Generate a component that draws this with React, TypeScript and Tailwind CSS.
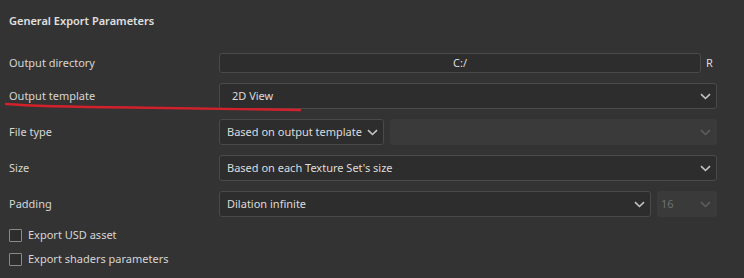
import React from 'react';

function Chevron({ dim = false }: { dim?: boolean }) {
    return (
        <svg width="11" height="7" viewBox="0 0 11 7" className="shrink-0">
            <path d="M1 1.2 L5.5 5.5 L10 1.2" fill="none" stroke={dim ? '#5e5e5e' : '#c4c4c4'} strokeWidth="1.6" />
        </svg>
    );
}

function Select({ value, className = '' }: { value: string; className?: string }) {
    return (
        <div className={`h-[26px] flex items-center justify-between pl-[7px] pr-[5px] rounded-[3px] border border-[#4a4a4a] bg-[#2d2d2d] text-[#dcdcdc] whitespace-nowrap ${className}`}>
            <span>{value}</span>
            <Chevron />
        </div>
    );
}

function Disabled({ value = '', className = '' }: { value?: string; className?: string }) {
    return (
        <div className={`h-[26px] flex items-center justify-between pl-[4px] pr-[6px] rounded-[3px] bg-[#3a3a3a] text-[#707070] ${className}`}>
            <span>{value}</span>
            <Chevron dim />
        </div>
    );
}

function Row({ label, children, className = '' }: { label: string; children: React.ReactNode; className?: string }) {
    return (
        <div className={`flex items-center ${className}`}>
            <div className="w-[210px] shrink-0">{label}</div>
            {children}
        </div>
    );
}

function Check({ label }: { label: string }) {
    return (
        <div className="flex items-center gap-[6px] h-[24px]">
            <div className="w-[13px] h-[13px] border border-[#8a8a8a] rounded-[1px] bg-[#2d2d2d]" />
            <span>{label}</span>
        </div>
    );
}

export default function App() {
    return (
        <div
            className="relative w-[744px] h-[278px] bg-[#333333] text-[#d6d6d6] text-[11px] overflow-hidden pl-[9px]"
            style={{ fontFamily: '"Noto Sans", "Open Sans", sans-serif' }}
        >
            <div className="h-[41px] pt-[1px] flex items-center font-semibold text-[#e0e0e0]">General Export Parameters</div>

            <Row label="Output directory" className="mt-[12px]">
                <div className="w-[482px] h-[20px] flex items-center justify-center rounded-[3px] border border-[#4a4a4a] bg-[#2d2d2d] text-[#dcdcdc]">
                    C:/
                </div>
                <span className="ml-[5px] text-[#dcdcdc]">R</span>
            </Row>

            <Row label="Output template" className="mt-[10px]">
                <Select value="2D View" className="w-[498px] pl-[12px]" />
            </Row>

            <Row label="File type" className="mt-[10px]">
                <Select value="Based on output template" className="w-[165px]" />
                <Disabled className="ml-[6px] w-[327px]" />
            </Row>

            <Row label="Size" className="mt-[10px]">
                <Select value="Based on each Texture Set's size" className="w-[498px]" />
            </Row>

            <Row label="Padding" className="mt-[10px]">
                <Select value="Dilation infinite" className="w-[432px]" />
                <Disabled value="16" className="ml-[6px] w-[60px]" />
            </Row>

            <div className="mt-[6px] flex flex-col">
                <Check label="Export USD asset" />
                <Check label="Export shaders parameters" />
            </div>

            {/* red annotation stroke */}
            <svg className="absolute left-0 top-0 pointer-events-none" width="744" height="278">
                <path
                    d="M6 104 C 30 106, 80 107, 130 107.5 C 190 108, 250 109.5, 300 110"
                    fill="none"
                    stroke="#d3212b"
                    strokeWidth="2.4"
                    strokeLinecap="round"
                />
            </svg>
        </div>
    );
}
